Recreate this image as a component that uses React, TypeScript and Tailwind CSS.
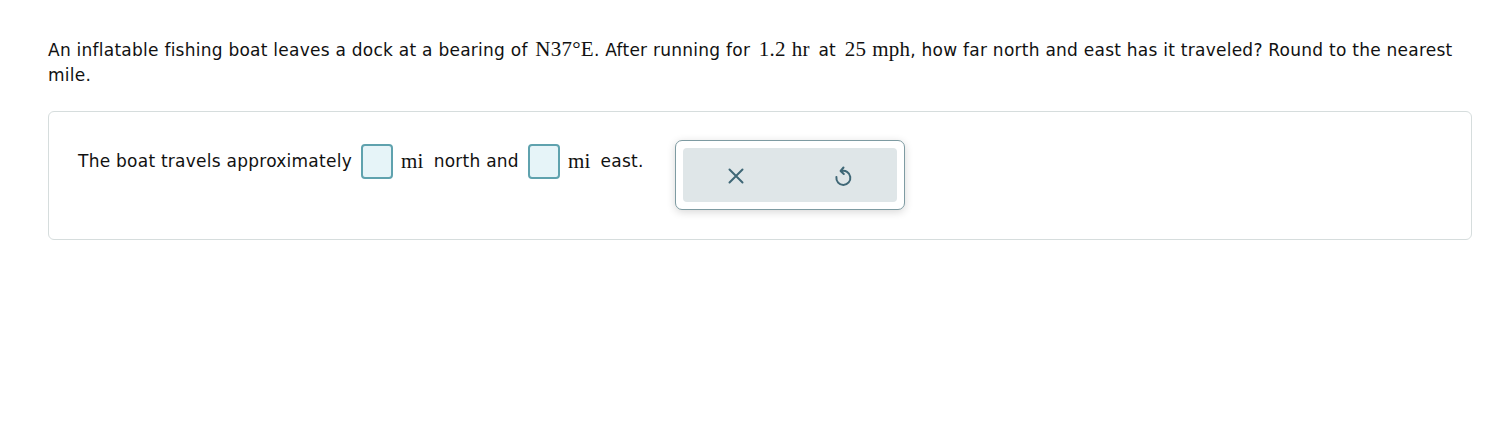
import React from "react";

const M = ({ children, size = "text-[21px]" }: { children: React.ReactNode; size?: string }) => (
  <span className={`${size} leading-none`} style={{ fontFamily: '"Liberation Serif", "DejaVu Serif", serif' }}>
    {children}
  </span>
);

const Box = () => (
  <span className="inline-block align-middle w-[32px] h-[35px] rounded-[4px] border-2 border-[#5fa2ae] bg-[#e6f4f8]" />
);

export default function App() {
  return (
    <div
      className="w-[1497px] h-[437px] bg-white text-[#111] text-[17px] tracking-[0.25px]"
      style={{ fontFamily: '"DejaVu Sans", Verdana, sans-serif' }}
    >
      <div className="pt-[38px] pl-[48px] pr-[24px]">
        <p className="leading-[25px]">
          An inflatable fishing boat leaves a dock at a bearing of{" "}
          <M>
            <span className="ml-[2px]">N37°E</span>
          </M>
          . After running for{" "}
          <M>
            <span className="mx-[3px]">1.2</span>
            <span className="ml-[3px] mr-[3px]">hr</span>
          </M>{" "}
          at{" "}
          <M>
            <span className="mx-[3px]">25</span>
            <span className="ml-[3px]">mph</span>
          </M>
          , how far north and east has it traveled? Round to the nearest mile.
        </p>
        <div className="mt-[23px] mr-[1px] h-[129px] border border-[#d6dddd] rounded-[6px] pl-[29px] pt-[28px] flex items-start gap-[31px]">
          <div className="mt-[4px] flex items-center h-[35px] whitespace-nowrap">
            <span>The boat travels approximately</span>
            <span className="ml-[9px] mr-[8px] flex"><Box /></span>
            <M>mi</M>
            <span className="ml-[10px]">north and</span>
            <span className="ml-[9px] mr-[8px] flex"><Box /></span>
            <M>mi</M>
            <span className="ml-[10px]">east.</span>
          </div>
          <div className="w-[230px] h-[70px] rounded-[7px] border border-[#7e9ba2] bg-white p-[7px] shadow-[0_2px_8px_rgba(0,0,0,0.16)]">
            <div className="h-full rounded-[4px] bg-[#dfe6e8] flex items-center">
              <div className="flex-1 flex justify-center">
                <svg width="18" height="18" viewBox="0 0 18 18" className="mt-[2px]">
                  <path d="M2.5 2.5 L15.5 15.5 M15.5 2.5 L2.5 15.5" stroke="#3f6776" strokeWidth="2" strokeLinecap="round" />
                </svg>
              </div>
              <div className="flex-1 flex justify-center">
                <svg width="20" height="22" viewBox="0 0 20 22" className="mt-[2px]">
                  <path
                    d="M8.3 6.2 A7 7 0 1 1 3.4 12"
                    fill="none"
                    stroke="#3f6776"
                    strokeWidth="2"
                    strokeLinecap="round"
                  />
                  <path d="M10.5 2.5 L7.6 6 L10.8 9" fill="none" stroke="#3f6776" strokeWidth="2" strokeLinecap="round" strokeLinejoin="round" />
                </svg>
              </div>
            </div>
          </div>
        </div>
      </div>
    </div>
  );
}
